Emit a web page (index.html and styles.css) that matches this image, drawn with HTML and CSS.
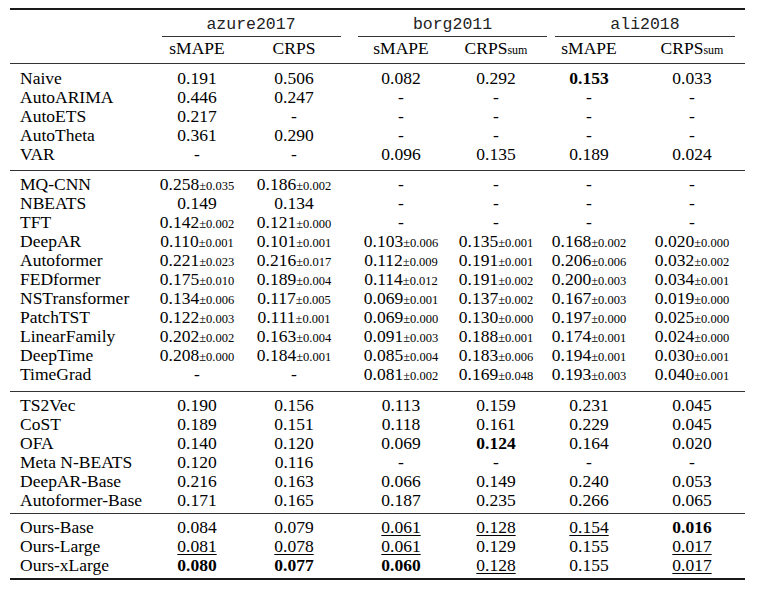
FILE: index.html
```html
<!DOCTYPE html>
<html>
<head>
<meta charset="utf-8">
<link rel="stylesheet" href="styles.css">
</head>
<body>
<div class="tbl">
  <div class="head">
    <div class="hrow">
      <div></div>
      <div class="dset"><span class="mono">azure2017</span><div class="crule crule-a"></div></div>
      <div class="dset"><span class="mono">borg2011</span><div class="crule crule-b"></div></div>
      <div class="dset"><span class="mono">ali2018</span><div class="crule crule-c"></div></div>
    </div>
    <div class="row row-h2">
      <div class="lbl"></div>
      <div class="c">sMAPE</div><div class="c">CRPS</div>
      <div class="c">sMAPE</div><div class="c">CRPS<span class="sub">sum</span></div>
      <div class="c">sMAPE</div><div class="c">CRPS<span class="sub">sum</span></div>
    </div>
  </div>

  <div class="grp g1">
    <div class="row"><div class="lbl">Naive</div><div class="c">0.191</div><div class="c">0.506</div><div class="c">0.082</div><div class="c">0.292</div><div class="c b">0.153</div><div class="c">0.033</div></div>
    <div class="row"><div class="lbl">AutoARIMA</div><div class="c">0.446</div><div class="c">0.247</div><div class="c">-</div><div class="c">-</div><div class="c">-</div><div class="c">-</div></div>
    <div class="row"><div class="lbl">AutoETS</div><div class="c">0.217</div><div class="c">-</div><div class="c">-</div><div class="c">-</div><div class="c">-</div><div class="c">-</div></div>
    <div class="row"><div class="lbl">AutoTheta</div><div class="c">0.361</div><div class="c">0.290</div><div class="c">-</div><div class="c">-</div><div class="c">-</div><div class="c">-</div></div>
    <div class="row"><div class="lbl">VAR</div><div class="c">-</div><div class="c">-</div><div class="c">0.096</div><div class="c">0.135</div><div class="c">0.189</div><div class="c">0.024</div></div>
  </div>

  <div class="grp g2">
    <div class="row"><div class="lbl">MQ-CNN</div><div class="c">0.258<span class="pm">±0.035</span></div><div class="c">0.186<span class="pm">±0.002</span></div><div class="c">-</div><div class="c">-</div><div class="c">-</div><div class="c">-</div></div>
    <div class="row"><div class="lbl">NBEATS</div><div class="c">0.149</div><div class="c">0.134</div><div class="c">-</div><div class="c">-</div><div class="c">-</div><div class="c">-</div></div>
    <div class="row"><div class="lbl">TFT</div><div class="c">0.142<span class="pm">±0.002</span></div><div class="c">0.121<span class="pm">±0.000</span></div><div class="c">-</div><div class="c">-</div><div class="c">-</div><div class="c">-</div></div>
    <div class="row"><div class="lbl">DeepAR</div><div class="c">0.110<span class="pm">±0.001</span></div><div class="c">0.101<span class="pm">±0.001</span></div><div class="c">0.103<span class="pm">±0.006</span></div><div class="c">0.135<span class="pm">±0.001</span></div><div class="c">0.168<span class="pm">±0.002</span></div><div class="c">0.020<span class="pm">±0.000</span></div></div>
    <div class="row"><div class="lbl">Autoformer</div><div class="c">0.221<span class="pm">±0.023</span></div><div class="c">0.216<span class="pm">±0.017</span></div><div class="c">0.112<span class="pm">±0.009</span></div><div class="c">0.191<span class="pm">±0.001</span></div><div class="c">0.206<span class="pm">±0.006</span></div><div class="c">0.032<span class="pm">±0.002</span></div></div>
    <div class="row"><div class="lbl">FEDformer</div><div class="c">0.175<span class="pm">±0.010</span></div><div class="c">0.189<span class="pm">±0.004</span></div><div class="c">0.114<span class="pm">±0.012</span></div><div class="c">0.191<span class="pm">±0.002</span></div><div class="c">0.200<span class="pm">±0.003</span></div><div class="c">0.034<span class="pm">±0.001</span></div></div>
    <div class="row"><div class="lbl">NSTransformer</div><div class="c">0.134<span class="pm">±0.006</span></div><div class="c">0.117<span class="pm">±0.005</span></div><div class="c">0.069<span class="pm">±0.001</span></div><div class="c">0.137<span class="pm">±0.002</span></div><div class="c">0.167<span class="pm">±0.003</span></div><div class="c">0.019<span class="pm">±0.000</span></div></div>
    <div class="row"><div class="lbl">PatchTST</div><div class="c">0.122<span class="pm">±0.003</span></div><div class="c">0.111<span class="pm">±0.001</span></div><div class="c">0.069<span class="pm">±0.000</span></div><div class="c">0.130<span class="pm">±0.000</span></div><div class="c">0.197<span class="pm">±0.000</span></div><div class="c">0.025<span class="pm">±0.000</span></div></div>
    <div class="row"><div class="lbl">LinearFamily</div><div class="c">0.202<span class="pm">±0.002</span></div><div class="c">0.163<span class="pm">±0.004</span></div><div class="c">0.091<span class="pm">±0.003</span></div><div class="c">0.188<span class="pm">±0.001</span></div><div class="c">0.174<span class="pm">±0.001</span></div><div class="c">0.024<span class="pm">±0.000</span></div></div>
    <div class="row"><div class="lbl">DeepTime</div><div class="c">0.208<span class="pm">±0.000</span></div><div class="c">0.184<span class="pm">±0.001</span></div><div class="c">0.085<span class="pm">±0.004</span></div><div class="c">0.183<span class="pm">±0.006</span></div><div class="c">0.194<span class="pm">±0.001</span></div><div class="c">0.030<span class="pm">±0.001</span></div></div>
    <div class="row"><div class="lbl">TimeGrad</div><div class="c">-</div><div class="c">-</div><div class="c">0.081<span class="pm">±0.002</span></div><div class="c">0.169<span class="pm">±0.048</span></div><div class="c">0.193<span class="pm">±0.003</span></div><div class="c">0.040<span class="pm">±0.001</span></div></div>
  </div>

  <div class="grp g3">
    <div class="row"><div class="lbl">TS2Vec</div><div class="c">0.190</div><div class="c">0.156</div><div class="c">0.113</div><div class="c">0.159</div><div class="c">0.231</div><div class="c">0.045</div></div>
    <div class="row"><div class="lbl">CoST</div><div class="c">0.189</div><div class="c">0.151</div><div class="c">0.118</div><div class="c">0.161</div><div class="c">0.229</div><div class="c">0.045</div></div>
    <div class="row"><div class="lbl">OFA</div><div class="c">0.140</div><div class="c">0.120</div><div class="c">0.069</div><div class="c b">0.124</div><div class="c">0.164</div><div class="c">0.020</div></div>
    <div class="row"><div class="lbl">Meta N-BEATS</div><div class="c">0.120</div><div class="c">0.116</div><div class="c">-</div><div class="c">-</div><div class="c">-</div><div class="c">-</div></div>
    <div class="row"><div class="lbl">DeepAR-Base</div><div class="c">0.216</div><div class="c">0.163</div><div class="c">0.066</div><div class="c">0.149</div><div class="c">0.240</div><div class="c">0.053</div></div>
    <div class="row"><div class="lbl">Autoformer-Base</div><div class="c">0.171</div><div class="c">0.165</div><div class="c">0.187</div><div class="c">0.235</div><div class="c">0.266</div><div class="c">0.065</div></div>
  </div>

  <div class="grp g4">
    <div class="row"><div class="lbl">Ours-Base</div><div class="c">0.084</div><div class="c">0.079</div><div class="c u">0.061</div><div class="c u">0.128</div><div class="c u">0.154</div><div class="c b">0.016</div></div>
    <div class="row"><div class="lbl">Ours-Large</div><div class="c u">0.081</div><div class="c u">0.078</div><div class="c u">0.061</div><div class="c">0.129</div><div class="c">0.155</div><div class="c u">0.017</div></div>
    <div class="row"><div class="lbl">Ours-xLarge</div><div class="c b">0.080</div><div class="c b">0.077</div><div class="c b">0.060</div><div class="c u">0.128</div><div class="c">0.155</div><div class="c u">0.017</div></div>
  </div>
</div>
</body>
</html>
```

FILE: styles.css
```css
html, body {
  margin: 0;
  padding: 0;
  background: #ffffff;
}

body {
  font-family: "Liberation Serif", "Times New Roman", serif;
  font-size: 17.5px;
  color: #000;
}

.tbl {
  margin: 8px 0 0 10px;
  width: 735px;
  border-top: 2px solid #1a1a1a;
  border-bottom: 2px solid #1a1a1a;
}

.head {
  padding: 4px 0 5px;
}

.hrow {
  display: grid;
  grid-template-columns: 142px 198px 205px 180px;
  line-height: 19px;
}

.dset {
  text-align: center;
}

.mono {
  font-family: "Liberation Mono", "Courier New", monospace;
  font-size: 16.5px;
  color: #222;
}

.crule {
  border-bottom: 1px solid #333;
  margin-top: 2px;
}

.crule-a { margin-left: 10px; margin-right: 9px; }
.crule-b { margin-left: 8px; margin-right: 8px; }
.crule-c { margin-left: 0; margin-right: 0; }

.row {
  display: grid;
  grid-template-columns: 142px 90px 104px 110px 80px 106px 100px;
  height: 19px;
  line-height: 19px;
}

.row-h2 {
  margin-top: 2px;
}

.lbl {
  padding-left: 10px;
  white-space: nowrap;
}

.c {
  display: flex;
  justify-content: center;
  align-items: baseline;
  white-space: nowrap;
}

.pm {
  font-size: 12.5px;
}

.sub {
  font-size: 12px;
  line-height: 1;
  vertical-align: -3px;
}

.b {
  font-weight: bold;
}

.u {
  text-decoration: underline;
  text-decoration-thickness: 1px;
  text-underline-offset: 2px;
}

.grp {
  border-top: 1px solid #333;
}

.g1 { padding: 5px 0 6px; }
.g2 { padding: 4px 0 7px; }
.g3 { padding: 4px 0 3px; }
.g4 { padding: 4px 0 3px; }
```
